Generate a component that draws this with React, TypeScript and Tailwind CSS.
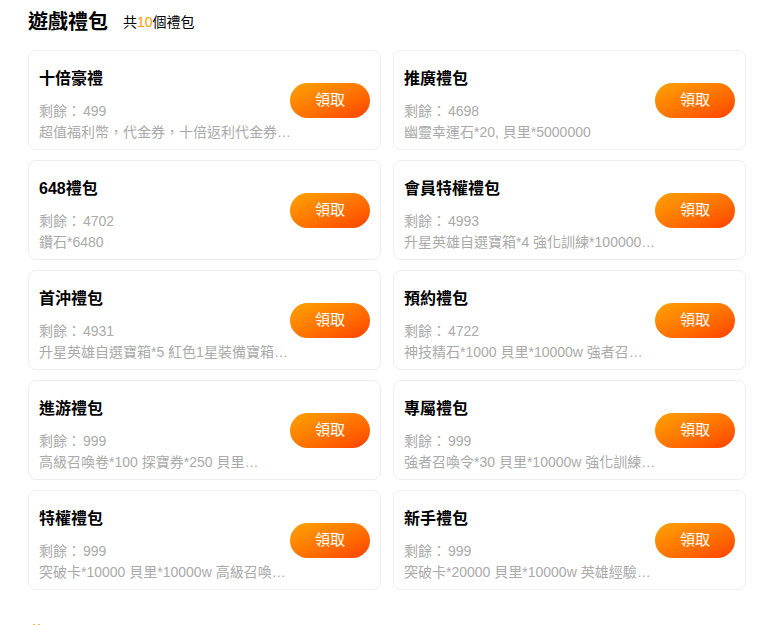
import React from 'react';

interface Gift {
  name: string;
  remain: number;
  desc: string;
}

const gifts: Gift[] = [
  { name: '十倍豪禮', remain: 499, desc: '超值福利幣，代金券，十倍返利代金券，超值福利' },
  { name: '推廣禮包', remain: 4698, desc: '幽靈幸運石*20, 貝里*5000000' },
  { name: '648禮包', remain: 4702, desc: '鑽石*6480' },
  { name: '會員特權禮包', remain: 4993, desc: '升星英雄自選寶箱*4 強化訓練*1000000 貝里' },
  { name: '首沖禮包', remain: 4931, desc: '升星英雄自選寶箱*5 紅色1星裝備寶箱*10 貝里' },
  { name: '預約禮包', remain: 4722, desc: '神技精石*1000 貝里*10000w 強者召…' },
  { name: '進游禮包', remain: 999, desc: '高級召喚卷*100 探寶券*250 貝里…' },
  { name: '專屬禮包', remain: 999, desc: '強者召喚令*30 貝里*10000w 強化訓練*10000' },
  { name: '特權禮包', remain: 999, desc: '突破卡*10000 貝里*10000w 高級召喚卷*100' },
  { name: '新手禮包', remain: 999, desc: '突破卡*20000 貝里*10000w 英雄經驗…' },
];

function GiftCard({ gift }: { gift: Gift }) {
  return (
    <div className="flex h-[100px] items-center rounded-lg border border-[#eeeeee] bg-white pl-[10px] pr-[10px]">
      <div className="mr-[-3px] flex min-w-0 flex-1 flex-col self-start pt-[16px]">
        <div className="h-6 text-[16px] font-bold leading-6 text-black">{gift.name}</div>
        <div className="mt-[10px] text-[14px] leading-[21px] text-[#aaaaaa]">
          剩餘：<span className="ml-[2px]">{gift.remain}</span>
        </div>
        <div className="truncate text-[14px] leading-[21px] text-[#aaaaaa]">{gift.desc}</div>
      </div>
      <button className="h-[35px] w-[80px] shrink-0 rounded-full bg-gradient-to-br from-[#ffa200] to-[#ff3c00] text-[15px] text-white">
        領取
      </button>
    </div>
  );
}

export default function App() {
  return (
    <div
      className="min-h-[625px] bg-white pl-[28px] pt-[8px]"
      style={{ fontFamily: '"Liberation Sans", "Noto Sans CJK TC", sans-serif' }}
    >
      <div className="flex h-[28px] items-center">
        <h1 className="text-[20px] font-bold text-black">遊戲禮包</h1>
        <span className="ml-[15px] text-[14px] text-black">
          共<span className="text-[#ff9900]">10</span>個禮包
        </span>
      </div>
      <div className="mt-[14px] grid w-[718px] grid-cols-2 gap-x-3 gap-y-[10px]">
        {gifts.map((g) => (
          <GiftCard key={g.name} gift={g} />
        ))}
      </div>
      <div className="ml-[5px] mt-[34px] flex gap-[3px]">
        <span className="h-[2px] w-[2px] rounded-full bg-[#ff9900]" />
        <span className="h-[2px] w-[2px] rounded-full bg-[#ff9900]" />
      </div>
    </div>
  );
}
